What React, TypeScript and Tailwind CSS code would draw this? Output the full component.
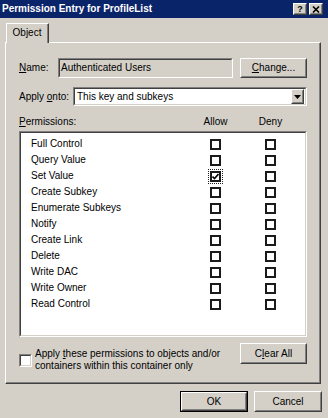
import type { ReactNode } from "react";

const perms: { name: string; allow: boolean; focus?: boolean }[] = [
  { name: "Full Control", allow: false },
  { name: "Query Value", allow: false },
  { name: "Set Value", allow: true, focus: true },
  { name: "Create Subkey", allow: false },
  { name: "Enumerate Subkeys", allow: false },
  { name: "Notify", allow: false },
  { name: "Create Link", allow: false },
  { name: "Delete", allow: false },
  { name: "Write DAC", allow: false },
  { name: "Write Owner", allow: false },
  { name: "Read Control", allow: false },
];

function Raised({ className = "", children }: { className?: string; children?: ReactNode }) {
  return (
    <div className={`flex border border-t-white border-l-white border-r-[#404040] border-b-[#404040] ${className}`}>
      <div className="flex h-full w-full items-center justify-center border border-t-[#d4d0c8] border-l-[#d4d0c8] border-r-[#808080] border-b-[#808080]">
        {children}
      </div>
    </div>
  );
}

function Sunken({ className = "", inner = "", children }: { className?: string; inner?: string; children?: ReactNode }) {
  return (
    <div className={`flex border border-t-[#808080] border-l-[#808080] border-r-white border-b-white ${className}`}>
      <div className={`flex h-full w-full border border-t-[#404040] border-l-[#404040] border-r-[#d4d0c8] border-b-[#d4d0c8] ${inner}`}>
        {children}
      </div>
    </div>
  );
}

function ListCheck({ checked = false, focus = false }: { checked?: boolean; focus?: boolean }) {
  return (
    <span
      className={`flex h-[15px] w-[15px] items-center justify-center border border-dotted ${
        focus ? "border-[#202020]" : "border-transparent"
      }`}
    >
      <span className="flex h-[11px] w-[11px] items-center justify-center border-2 border-[#1a1a1a] bg-white">
        {checked && (
          <svg width="7" height="7" viewBox="0 0 7 7">
            <path d="M0.5 3.5 L2.5 5.5 L6.5 1" stroke="#000" strokeWidth="1.6" fill="none" />
          </svg>
        )}
      </span>
    </span>
  );
}

export default function App() {
  return (
    <div className="flex h-[418px] w-[328px] flex-col bg-[#d4d0c8] font-['Liberation_Sans',Arial,sans-serif] text-[10px] leading-[12px] text-black">
      {/* title bar */}
      <div className="flex h-[18px] items-center bg-[#0a246a] pl-[2px] pr-[5px]">
        <span className="text-[10px] font-bold text-white">Permission Entry for ProfileList</span>
        <div className="ml-auto flex gap-[2px]">
          <Raised className="h-[12px] w-[14px] bg-[#d4d0c8]">
            <span className="text-[9px] font-bold leading-[9px]">?</span>
          </Raised>
          <Raised className="h-[12px] w-[14px] bg-[#d4d0c8]">
            <svg width="8" height="7" viewBox="0 0 8 7">
              <path d="M1 0.5 L7 6.5 M7 0.5 L1 6.5" stroke="#000" strokeWidth="1.6" />
            </svg>
          </Raised>
        </div>
      </div>

      {/* tab */}
      <div className="mt-[5px] flex">
        <div className="relative z-10 -mb-[1px] ml-[6px] flex h-[20px] w-[43px] border-t border-l border-r border-t-white border-l-white border-r-[#404040] bg-[#d4d0c8]">
          <div className="flex h-full w-full items-center justify-center border-r border-r-[#808080] pb-[1px]">
            Object
          </div>
        </div>
      </div>

      {/* tab panel */}
      <div className="ml-[5px] flex h-[342px] w-[316px] border border-t-white border-l-white border-r-[#404040] border-b-[#404040]">
        <div className="flex h-full w-full flex-col border-r border-b border-r-[#808080] border-b-[#808080] pt-[15px] pl-[13px] pr-[12px]">
          {/* name */}
          <div className="flex h-[20px] items-center">
            <span className="w-[39px]">
              <span className="underline">N</span>ame:
            </span>
            <Sunken className="h-[20px] w-[175px]" inner="items-center pl-[1px] bg-[#d4d0c8]">
              Authenticated Users
            </Sunken>
            <Raised className="ml-auto h-[20px] w-[67px]">
              <span>
                <span className="underline">C</span>hange...
              </span>
            </Raised>
          </div>

          {/* apply onto */}
          <div className="mt-[9px] flex h-[19px] items-center">
            <span className="w-[54px]">
              Apply <span className="underline">o</span>nto:
            </span>
            <Sunken className="h-[19px] w-[234px]" inner="items-center bg-white pl-[2px] pr-[1px]">
              <span>This key and subkeys</span>
              <Raised className="ml-auto h-[15px] w-[13px] bg-[#d4d0c8]">
                <svg width="7" height="4" viewBox="0 0 7 4">
                  <path d="M0 0 H7 L3.5 4 Z" fill="#000" />
                </svg>
              </Raised>
            </Sunken>
          </div>

          {/* header */}
          <div className="mt-[10px] flex h-[12px]">
            <span className="w-[189px]">
              <span className="underline">P</span>ermissions:
            </span>
            <span className="flex w-[15px] justify-center whitespace-nowrap">Allow</span>
            <span className="ml-[40px] flex w-[15px] justify-center whitespace-nowrap">Deny</span>
          </div>

          {/* list */}
          <Sunken className="mt-[3px] h-[206px] w-[288px]" inner="flex-col bg-white pt-[3px]">
            {perms.map((p) => (
              <div key={p.name} className="flex h-[16px] items-center">
                <span className="w-[187px] pl-[10px]">{p.name}</span>
                <ListCheck checked={p.allow} focus={p.focus} />
                <span className="ml-[40px] flex">
                  <ListCheck />
                </span>
              </div>
            ))}
          </Sunken>

          {/* bottom row */}
          <div className="mt-[6px] flex items-start">
            <div className="mt-[5px] flex items-start">
              <Sunken className="mt-[6px] h-[13px] w-[13px]" inner="bg-white" />
              <span className="ml-[3px]">
                Apply <span className="underline">t</span>hese permissions to objects and/or
                <br />
                containers within this container only
              </span>
            </div>
            <Raised className="ml-auto h-[21px] w-[67px]">
              <span>
                C<span className="underline">l</span>ear All
              </span>
            </Raised>
          </div>
        </div>
      </div>

      {/* dialog buttons */}
      <div className="mt-[7px] flex justify-end gap-[6px] pr-[6px]">
        <div className="flex h-[21px] w-[68px] border border-black">
          <Raised className="h-full w-full">OK</Raised>
        </div>
        <Raised className="h-[21px] w-[68px]">Cancel</Raised>
      </div>
    </div>
  );
}
